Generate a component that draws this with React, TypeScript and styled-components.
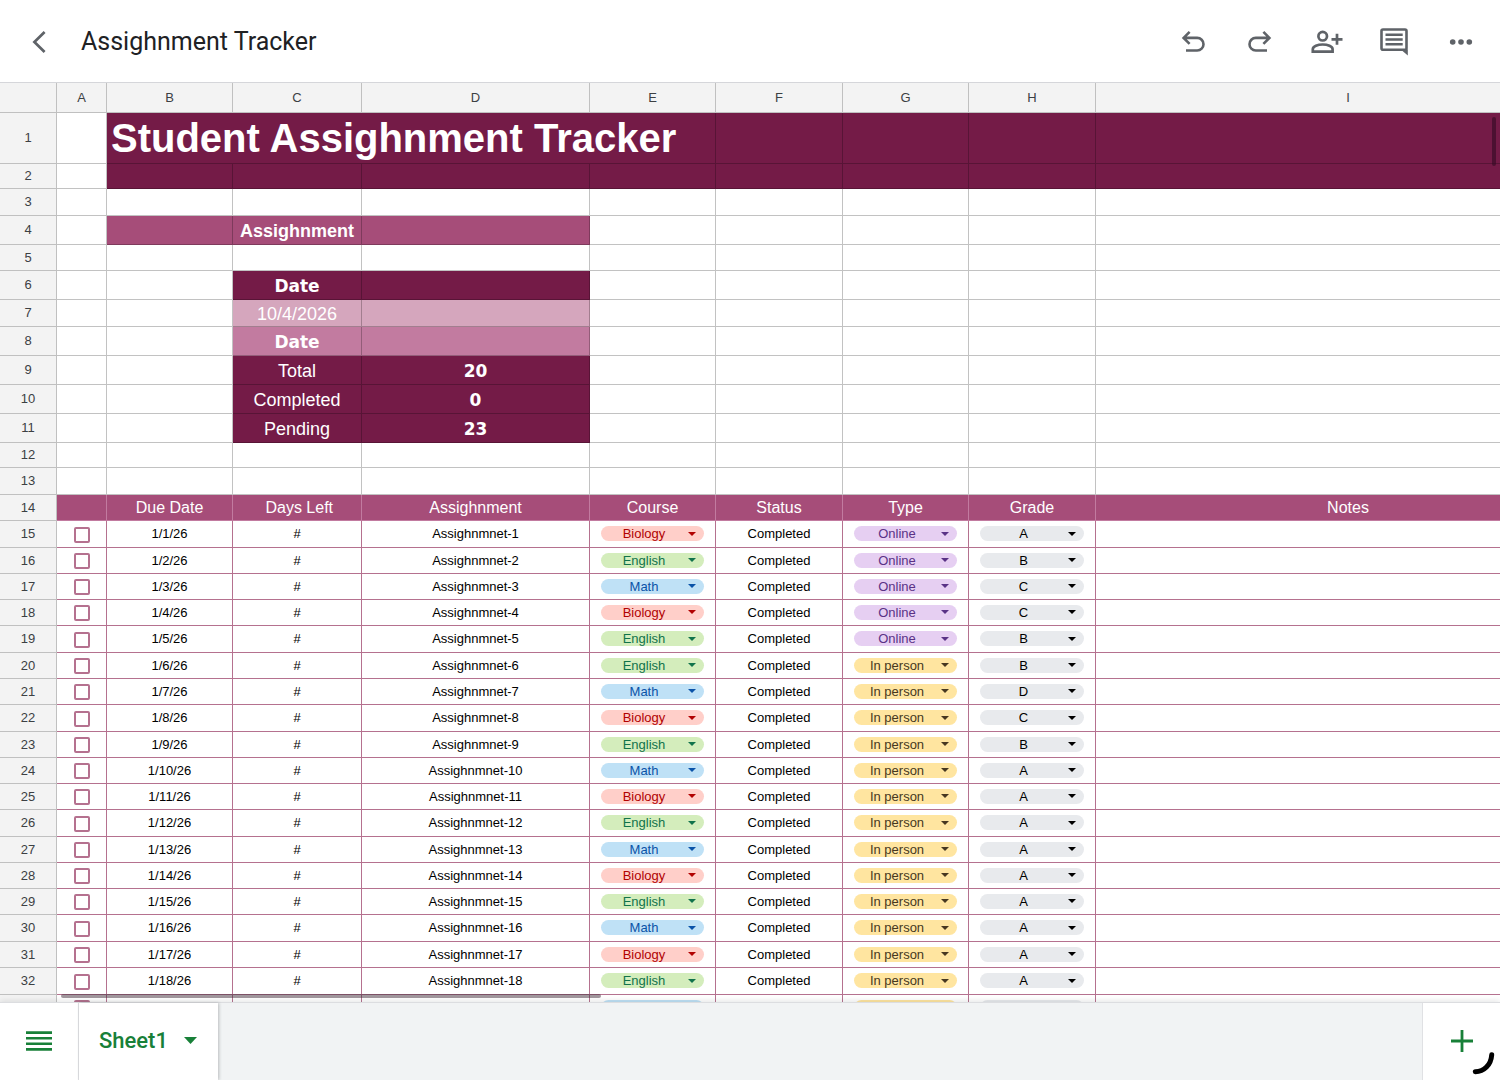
import React from "react";
import styled, { createGlobalStyle } from "styled-components";

const GlobalStyle = createGlobalStyle`
  *, *::before, *::after { box-sizing: border-box; }
  body { margin: 0; background: #fff; font-family: "Liberation Sans", Arial, sans-serif; }
`;

const colors = {
  wine: "#741b47",
  plum: "#a64d79",
  blush: "#d5a6bd",
  rose: "#c27ba0",
  rule: "#b5718f",
  green: "#188038",
  icon: "#5f6368",
};

const Page = styled.div`
  display: flex;
  flex-direction: column;
  height: 100vh;
  overflow: hidden;
`;

/* Top bar */

const TopBar = styled.header`
  display: flex;
  align-items: center;
  flex: none;
  height: 83px;
  padding: 2px 6px 0 0;
  border-bottom: 1px solid #d5d6da;
  background: #fff;
`;

const IconButton = styled.button<{ $width: number }>`
  display: flex;
  align-items: center;
  justify-content: center;
  width: ${(p) => p.$width}px;
  height: 100%;
  padding: 0;
  border: 0;
  background: none;
  color: inherit;
`;

const Title = styled.h1`
  flex: 1;
  margin: 0;
  padding-left: 4px;
  font: 400 25px/32px Roboto, "Open Sans", sans-serif;
  color: #202124;
`;

const Actions = styled.div`
  display: flex;
  height: 100%;
  color: ${colors.icon};
`;

/* Grid */

const Viewport = styled.main`
  position: relative;
  flex: 1;
  min-height: 0;
  overflow: hidden;
`;

const Grid = styled.table`
  table-layout: fixed;
  width: 100%;
  min-width: 1601px;
  border-collapse: separate;
  border-spacing: 0;
  font-size: 13px;
  line-height: 15px;
`;

const Col = styled.col<{ $width?: number }>`
  width: ${(p) => (p.$width ? `${p.$width}px` : "auto")};
`;

const Row = styled.tr<{ $height: number }>`
  height: ${(p) => p.$height}px;
`;

const Heading = styled.th`
  padding: 0 0 1px;
  border-right: 1px solid #c0c0c0;
  border-bottom: 1px solid #c0c0c0;
  background: #f3f3f3;
  color: #3c4043;
  font-weight: 400;
`;

const Cell = styled.td<{ $fill?: string }>`
  padding: 1px 0 0;
  border-right: 1px solid rgba(0, 0, 0, 0.24);
  border-bottom: 1px solid rgba(0, 0, 0, 0.24);
  background: ${(p) => p.$fill ?? "#fff"};
  color: #fff;
  font-size: 18px;
  line-height: 20px;
  text-align: center;
  white-space: nowrap;
`;

const BannerCell = styled(Cell)`
  padding: 0 0 0 4px;
  font-size: 40px;
  line-height: 46px;
  font-weight: 700;
  text-align: left;
`;

const BoldCell = styled(Cell)`
  font-weight: 700;
`;

const HeavyCell = styled(Cell)`
  font-family: "DejaVu Sans", "Liberation Sans", sans-serif;
  font-size: 17px;
  font-weight: 700;
`;

const FieldCell = styled.th`
  padding: 0;
  border-right: 1px solid ${colors.rose};
  border-bottom: 1px solid ${colors.rose};
  background: ${colors.plum};
  color: #fff;
  font-size: 16px;
  line-height: 18px;
  font-weight: 400;
`;

const DataCell = styled.td`
  padding: 0 0 1px;
  border-right: 1px solid ${colors.rule};
  border-bottom: 1px solid ${colors.rule};
  color: #000;
  text-align: center;
  white-space: nowrap;
`;

const CheckBox = styled.input`
  appearance: none;
  display: block;
  width: 16px;
  height: 16px;
  margin: 2px auto 0;
  border: 2px solid ${colors.rule};
  border-radius: 2px;
  background: #fff;
`;

const Chip = styled.div<{ $ink: string; $tint: string }>`
  display: grid;
  align-items: center;
  height: 15px;
  margin: 0 11px;
  border-radius: 8px;
  background: ${(p) => p.$tint};
  color: ${(p) => p.$ink};

  > * { grid-area: 1 / 1; }
`;

const ChipSelect = styled.select`
  appearance: none;
  width: 100%;
  height: 15px;
  padding: 0 17px 0 0;
  border: 0;
  background: none;
  color: inherit;
  font: 13px/15px "Liberation Sans", Arial, sans-serif;
  text-align: center;
  text-align-last: center;
`;

const ChipArrow = styled.svg`
  justify-self: end;
  margin-right: 8px;
  pointer-events: none;
`;

const HorizontalThumb = styled.div`
  position: absolute;
  left: 61px;
  bottom: 4px;
  width: 540px;
  height: 4px;
  border-radius: 2px;
  background: rgba(70, 50, 62, 0.5);
`;

const VerticalThumb = styled.div`
  position: absolute;
  top: 34px;
  right: 4px;
  width: 4px;
  height: 49px;
  border-radius: 2px;
  background: rgba(50, 10, 35, 0.6);
`;

/* Sheet bar */

const SheetBar = styled.footer`
  position: relative;
  display: flex;
  flex: none;
  height: 78px;
  border-top: 1px solid #dcdde0;
  background: #f1f3f4;
  color: ${colors.green};
  box-shadow: 0 -1px 6px rgba(60, 64, 67, 0.14);
`;

const BarEnd = styled.div<{ $side: "left" | "right" }>`
  padding-bottom: 2px;
  background: #fff;
  border-${(p) => (p.$side === "left" ? "right" : "left")}: 1px solid #e0e1e4;
`;

const Tab = styled.button`
  display: flex;
  align-items: center;
  justify-content: space-between;
  width: 139px;
  padding: 0 21px 2px 20px;
  border: 0;
  background: #fff;
  color: inherit;
  font: 500 22px/28px Roboto, "Open Sans", sans-serif;
  box-shadow: 1px 0 3px rgba(60, 64, 67, 0.3);
`;

const Spacer = styled.div`
  flex: 1;
`;

const Arc = styled.svg`
  position: absolute;
  right: 4px;
  bottom: 4px;
  pointer-events: none;
`;

type Swatch = { ink: string; tint: string };

const swatches: Record<string, Swatch> = {
  Biology: { ink: "#b10202", tint: "#ffcfc9" },
  English: { ink: "#11734b", tint: "#d4edbc" },
  Math: { ink: "#0a53a8", tint: "#bfe1f6" },
  Online: { ink: "#5a3286", tint: "#e6cff2" },
  "In person": { ink: "#473821", tint: "#ffe5a0" },
};
const plainSwatch: Swatch = { ink: "#000", tint: "#e8eaed" };

const courseNames = ["Biology", "English", "Math"];
const typeNames = ["Online", "In person"];
const gradeNames = ["A", "B", "C", "D"];

const courses = "BEMBEEMBEMBEMBEMBEM".split("");
const grades = "ABCCBBDCBAAAAAAAAAA".split("");
const rowHeights = [27, 26, 26, 26, 27, 26, 26, 27, 26, 26, 26, 27, 26, 26, 26, 27, 26, 27, 26];

const assignments = rowHeights.map((height, i) => ({
  height,
  row: i + 15,
  due: `1/${i + 1}/26`,
  name: `Assighnmnet-${i + 1}`,
  course: courseNames.find((c) => c[0] === courses[i])!,
  type: i < 5 ? "Online" : "In person",
  grade: grades[i],
}));

const columnWidths = [57, 50, 126, 129, 228, 126, 127, 126, 127];
const columnNames = ["A", "B", "C", "D", "E", "F", "G", "H", "I"];
const fieldNames = ["", "Due Date", "\u00a0Days Left", "Assighnment", "Course", "Status", "Type", "Grade", "Notes"];

const Blank = ({ count, fill }: { count: number; fill?: string }) => (
  <>
    {Array.from({ length: count }, (_, i) => (
      <Cell key={i} $fill={fill} />
    ))}
  </>
);

const EmptyRow = ({ row, height }: { row: number; height: number }) => (
  <Row $height={height}>
    <Heading scope="row">{row}</Heading>
    <Blank count={9} />
  </Row>
);

type SummaryProps = { row: number; height: number; fill: string; label: string; value?: string; heavy?: boolean };

const SummaryRow = ({ row, height, fill, label, value, heavy }: SummaryProps) => {
  const Label = heavy ? HeavyCell : Cell;
  return (
    <Row $height={height}>
      <Heading scope="row">{row}</Heading>
      <Blank count={2} />
      <Label $fill={fill}>{label}</Label>
      <HeavyCell $fill={fill}>{value}</HeavyCell>
      <Blank count={5} />
    </Row>
  );
};

const ChipField = ({ value, options, label }: { value: string; options: string[]; label: string }) => {
  const { ink, tint } = swatches[value] ?? plainSwatch;
  return (
    <Chip $ink={ink} $tint={tint}>
      <ChipSelect defaultValue={value} aria-label={label}>
        {options.map((o) => (
          <option key={o}>{o}</option>
        ))}
      </ChipSelect>
      <ChipArrow width="8" height="4" viewBox="0 0 8 4" aria-hidden="true">
        <path d="M0 0h8L4 4z" fill="currentColor" />
      </ChipArrow>
    </Chip>
  );
};

export default function App() {
  return (
    <Page>
      <GlobalStyle />
      <TopBar>
        <IconButton $width={77} aria-label="Back">
          <svg width="14" height="22" viewBox="0 0 14 22" fill="none" stroke={colors.icon} strokeWidth="2.7">
            <path d="M12.6 1 2.4 11l10.2 10" />
          </svg>
        </IconButton>
        <Title>Assighnment Tracker</Title>
        <Actions>
          <IconButton $width={67} aria-label="Undo">
            <svg width="24" height="24" viewBox="0 0 24 24" fill="none" stroke="currentColor" strokeWidth="2.6">
              <path d="M8.6 1.9 2.6 7.9l6 6M2.8 7.9h13.4a6.2 6.2 0 0 1 0 12.6H5" />
            </svg>
          </IconButton>
          <IconButton $width={67} aria-label="Redo">
            <svg width="24" height="24" viewBox="0 0 24 24" fill="none" stroke="currentColor" strokeWidth="2.6">
              <path d="m15.4 1.9 6 6-6 6M21.2 7.9H7.8a6.2 6.2 0 0 0 0 12.6H19" />
            </svg>
          </IconButton>
          <IconButton $width={67} aria-label="Add people">
            <svg width="32" height="24" viewBox="0 0 32 24" fill="none" stroke="currentColor" strokeWidth="2.7">
              <circle cx="11.7" cy="6.2" r="4.3" />
              <path d="M1.8 21.7v-2.4c0-3 5-4.8 9.9-4.8s9.9 1.8 9.9 4.8v2.4z" />
              <path d="M26 3.8v11M20.5 9.3h11" />
            </svg>
          </IconButton>
          <IconButton $width={67} aria-label="Comments">
            <svg width="28" height="28" viewBox="0 0 28 28" fill="none" stroke="currentColor" strokeWidth="2.6">
              <rect x="1.5" y="1.5" width="25" height="20.2" rx="1.5" />
              <path d="M5.5 6.7h17.2M5.5 11.5h17.2M5.5 16.3h17.2" />
              <path d="M20.8 21.5h7v6z" fill="currentColor" stroke="none" />
            </svg>
          </IconButton>
          <IconButton $width={67} aria-label="More">
            <svg width="24" height="6" viewBox="0 0 24 6" fill="currentColor">
              <circle cx="3.7" cy="3" r="2.8" />
              <circle cx="12" cy="3" r="2.8" />
              <circle cx="20.3" cy="3" r="2.8" />
            </svg>
          </IconButton>
        </Actions>
      </TopBar>

      <Viewport>
        <Grid>
          <colgroup>
            {columnWidths.map((w, i) => (
              <Col key={i} $width={w} />
            ))}
            <Col />
          </colgroup>
          <thead>
            <Row $height={30}>
              <Heading />
              {columnNames.map((c) => (
                <Heading key={c} scope="col">{c}</Heading>
              ))}
            </Row>
          </thead>
          <tbody>
            <Row $height={51}>
              <Heading scope="row">1</Heading>
              <Cell />
              <BannerCell colSpan={4} $fill={colors.wine}>Student Assighnment Tracker</BannerCell>
              <Blank count={4} fill={colors.wine} />
            </Row>
            <Row $height={25}>
              <Heading scope="row">2</Heading>
              <Cell />
              <Blank count={8} fill={colors.wine} />
            </Row>
            <EmptyRow row={3} height={27} />
            <Row $height={29}>
              <Heading scope="row">4</Heading>
              <Cell />
              <Cell $fill={colors.plum} />
              <BoldCell $fill={colors.plum}>Assighnment</BoldCell>
              <Cell $fill={colors.plum} />
              <Blank count={5} />
            </Row>
            <EmptyRow row={5} height={26} />
            <SummaryRow row={6} height={29} fill={colors.wine} label="Date" heavy />
            <SummaryRow row={7} height={27} fill={colors.blush} label="10/4/2026" />
            <SummaryRow row={8} height={29} fill={colors.rose} label="Date" heavy />
            <SummaryRow row={9} height={29} fill={colors.wine} label="Total" value="20" />
            <SummaryRow row={10} height={29} fill={colors.wine} label="Completed" value="0" />
            <SummaryRow row={11} height={29} fill={colors.wine} label="Pending" value="23" />
            <EmptyRow row={12} height={25} />
            <EmptyRow row={13} height={27} />
            <Row $height={26}>
              <Heading scope="row">14</Heading>
              {fieldNames.map((f, i) => (
                <FieldCell key={i} scope="col">{f}</FieldCell>
              ))}
            </Row>
            {assignments.map((a) => (
              <Row key={a.row} $height={a.height}>
                <Heading scope="row">{a.row}</Heading>
                <DataCell>
                  <CheckBox type="checkbox" aria-label={`${a.name} done`} />
                </DataCell>
                <DataCell>{a.due}</DataCell>
                <DataCell>#</DataCell>
                <DataCell>{a.name}</DataCell>
                <DataCell>
                  <ChipField value={a.course} options={courseNames} label={`${a.name} course`} />
                </DataCell>
                <DataCell>Completed</DataCell>
                <DataCell>
                  <ChipField value={a.type} options={typeNames} label={`${a.name} type`} />
                </DataCell>
                <DataCell>
                  <ChipField value={a.grade} options={gradeNames} label={`${a.name} grade`} />
                </DataCell>
                <DataCell />
              </Row>
            ))}
          </tbody>
        </Grid>
        <HorizontalThumb />
        <VerticalThumb />
      </Viewport>

      <SheetBar>
        <BarEnd $side="left">
          <IconButton $width={78} aria-label="All sheets">
            <svg width="26" height="20" viewBox="0 0 26 20" stroke="currentColor" strokeWidth="2.6">
              <path d="M0 1.6h26M0 7.2h26M0 12.8h26M0 18.4h26" />
            </svg>
          </IconButton>
        </BarEnd>
        <Tab>
          Sheet1
          <svg width="13" height="7" viewBox="0 0 13 7" aria-hidden="true">
            <path d="M0 0h13L6.5 7z" fill="currentColor" />
          </svg>
        </Tab>
        <Spacer />
        <BarEnd $side="right">
          <IconButton $width={77} aria-label="Add sheet">
            <svg width="22" height="22" viewBox="0 0 22 22" stroke="currentColor" strokeWidth="2.8">
              <path d="M11 0v22M0 11h22" />
            </svg>
          </IconButton>
        </BarEnd>
        <Arc width="24" height="24" viewBox="0 0 24 24" fill="none" stroke="#000" strokeWidth="5" strokeLinecap="round" aria-hidden="true">
          <path d="M19.7 2.8C19 13 12 19.5 3.3 19.7" />
        </Arc>
      </SheetBar>
    </Page>
  );
}
